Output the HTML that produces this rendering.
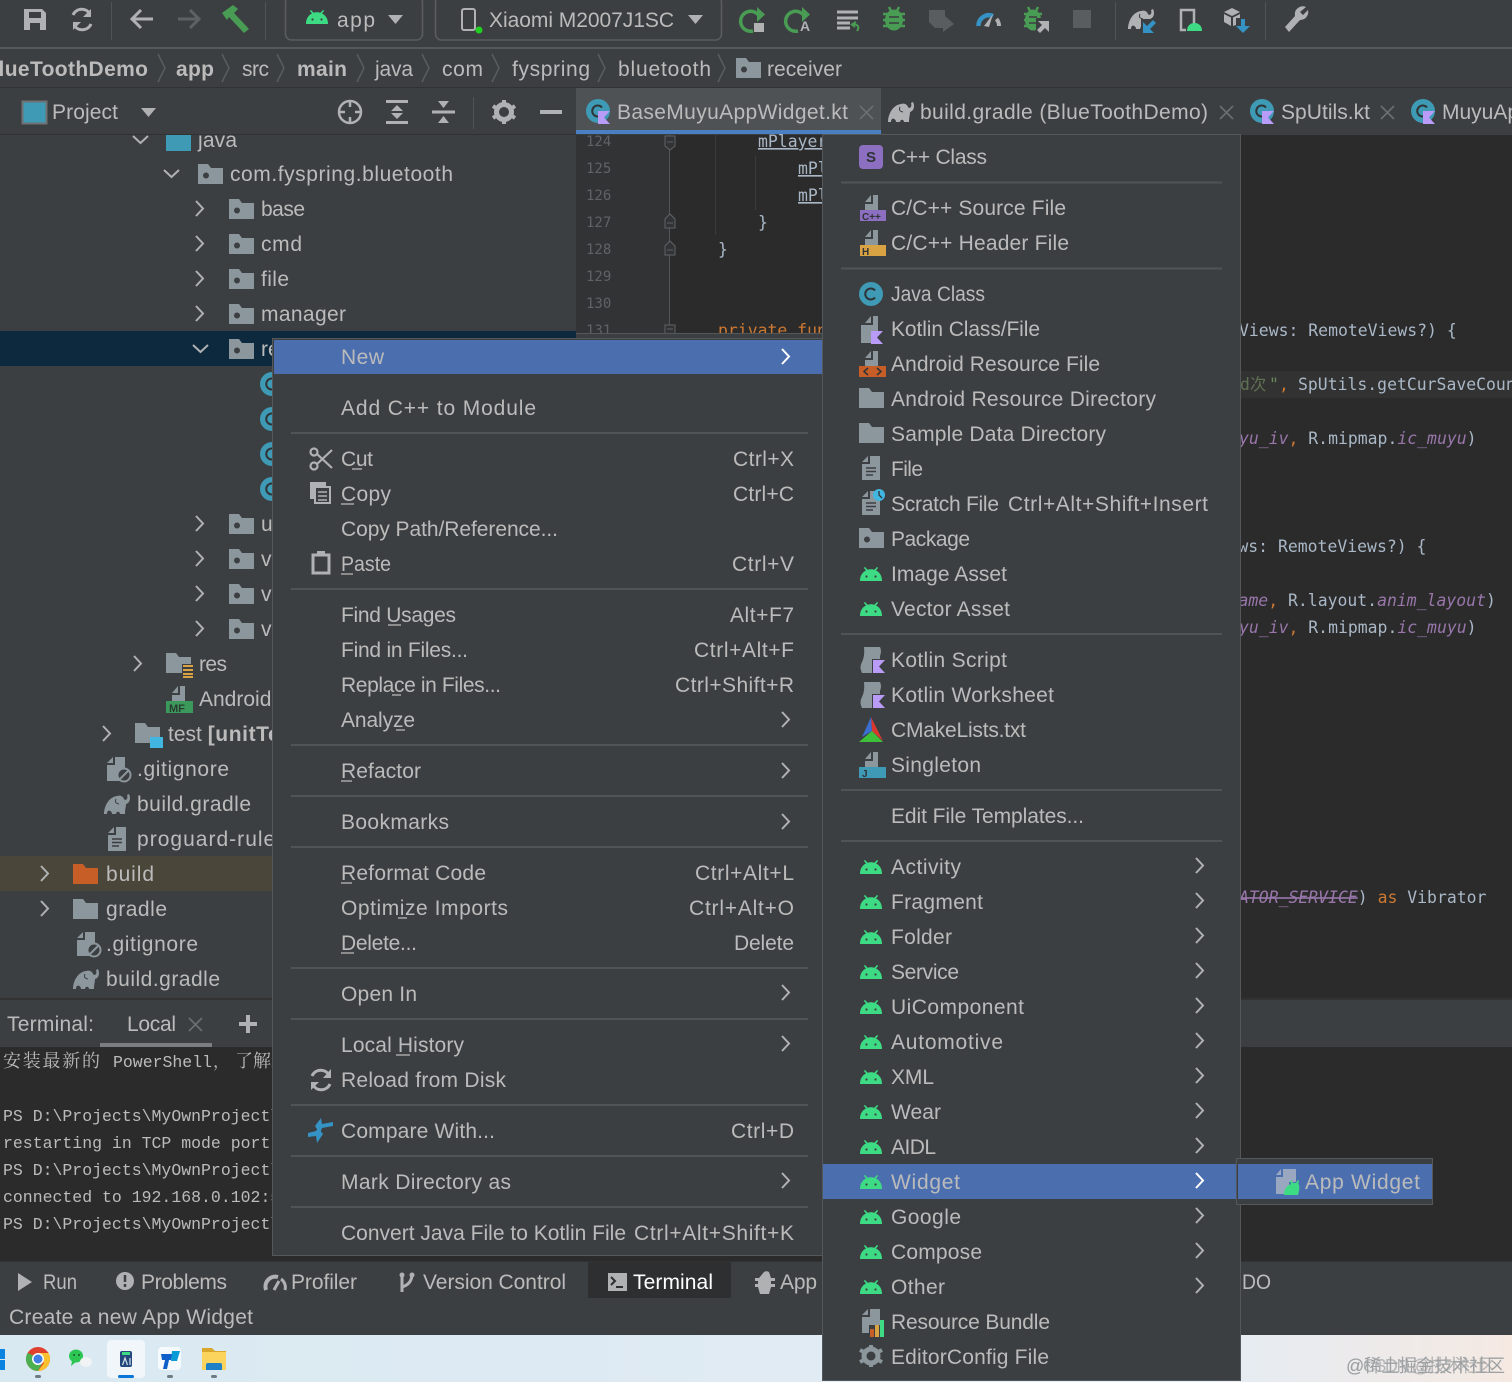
<!DOCTYPE html>
<html><head><meta charset="utf-8"><title>Android Studio</title>
<style>
html,body{margin:0;padding:0;background:#3c3f41;width:1512px;height:1382px;overflow:hidden}
svg{display:block}
text{font-family:"Liberation Sans","Noto Sans CJK SC",sans-serif;font-size:21px;fill:#bbb;white-space:pre}
text.m{font-family:"DejaVu Sans Mono","Noto Sans CJK SC",monospace;font-size:16.44px;fill:#a9b7c6}
text.t{font-family:"Liberation Mono","Noto Serif CJK SC",monospace;font-size:16.5px;fill:#bbb}
.ln{font-family:"DejaVu Sans Mono",monospace;font-size:14px;fill:#606366}
.b{font-weight:bold}
.sep{stroke:#515456;stroke-width:2}
.ch{fill:none;stroke:#afb1b3;stroke-width:2}
.chw{fill:none;stroke:#fff;stroke-width:2}
</style></head><body>
<svg width="1512" height="1382" viewBox="0 0 1512 1382" xmlns="http://www.w3.org/2000/svg">
<defs>
<linearGradient id="tb" x1="0" x2="1" y1="0" y2="0"><stop offset="0" stop-color="#d9e9f2"/><stop offset=".8" stop-color="#e4ecf4"/><stop offset="1" stop-color="#f5e9e2"/></linearGradient>
<g id="an"><path fill="#3ddc84" d="M0 14C0 8 3 5 6 3.5L3.8.8 5 0 7.6 2.8C9.5 2 12.5 2 14.4 2.8L17 0 18.2.8 16 3.5C19 5 22 8 22 14Z"/><circle cx="6.5" cy="9.5" r="1.1" fill="#3c3f41"/><circle cx="15.5" cy="9.5" r="1.1" fill="#3c3f41"/></g>
<path id="fo" d="M0 0H10L13 4H25V20H0Z"/>
<g id="pk"><use href="#fo" fill="#8c969d"/><circle cx="8" cy="11.5" r="3" fill="#3c3f41"/></g>
<path id="dc" fill="#8c969d" d="M6 0V6H0Z M8 0H18V24H0V8H8Z"/>
<g id="tx"><use href="#dc"/><path stroke="#3c3f41" stroke-width="1.6" d="M4 12H14M4 15.5H14M4 19H11"/></g>
<path id="dt" fill="#8c969d" d="M6 0V7H0Z M8 0H13V15H0V9H8Z"/>
<path id="k" fill="#b99bf8" d="M0 0H12L6 6.5 12 13H0Z"/>
<g id="ks"><path fill="#8c969d" d="M4 0H20Q22 4 20 9V12H12V26H2Q-1 20 2 15 5 9 4 0Z"/><use href="#k" x="13" y="13"/></g>
<g id="cc"><circle cx="12" cy="12" r="12" fill="#3e9ab5"/><path d="M16 8.500A5.500 5.500 0 1 0 16 15.500" fill="none" stroke="#2f3436" stroke-width="2"/></g>
<g id="ck"><use href="#cc"/><use href="#k" x="12" y="12"/></g>
<g id="el"><path d="M0 20C0 12 5 3 13 2 16 1 19 2 20 5L21 6C23 6 24 4 23 1L25 0C27 4 26 9 22 10 22 13 21 15 21 20H16C16 17 12 17 12 20H8C8 17 5 16 4 17 3 18 3 19 3 20Z"/><path fill="none" stroke="#3c3f41" stroke-width="1" d="M12 5Q10 9 15 10"/></g>
<g id="gi"><use href="#dc"/><circle cx="17" cy="18" r="6.500" fill="#3c3f41" stroke="#8c969d" stroke-width="2"/><path d="M13 22L21 14" stroke="#8c969d" stroke-width="2"/></g>
<path id="cr" class="ch" d="M0 0L7 7.500 0 15"/>
<path id="cw" class="chw" d="M0 0L7 7.500 0 15"/>
<path id="cd" class="ch" d="M0 0L7.500 7 15 0"/>
<path id="x" fill="none" stroke="#6c6f71" stroke-width="1.600" d="M0 0L13 13M13 0L0 13"/>
<path id="tri" fill="#afb1b3" d="M0 0H15L7.500 9Z"/>
</defs>

<!-- backgrounds -->
<rect width="1512" height="1382" fill="#3c3f41"/>
<rect x="0" y="47" width="1512" height="2" fill="#55585a"/>
<rect x="0" y="87" width="1512" height="1" fill="#323232"/>
<rect x="576" y="135" width="936" height="865" fill="#2b2b2b"/>
<rect x="576" y="135" width="93" height="200" fill="#313335"/>
<rect x="1240" y="371" width="272" height="27" fill="#323232"/>

<!-- toolbar -->
<g fill="#afb1b3">
<path d="M24 9H42L46 13V30H24Z M29 12V18H41V12Z M30 23V30H40V23Z" fill-rule="evenodd"/>
<path fill="none" stroke="#afb1b3" stroke-width="3" d="M90 14A9.500 9.500 0 0 0 73 15M74 25A9.500 9.500 0 0 0 91 24"/>
<path d="M91 9V17H83Z M73 30V22H81Z"/>
<path fill="none" stroke="#afb1b3" stroke-width="3" d="M153 19H133M141 10L132 19 141 28"/>
<path fill="none" stroke="#5e6163" stroke-width="3" d="M178 19H198M190 10L199 19 190 28"/>
</g>
<rect x="111" y="2" width="1" height="38" fill="#515456"/><rect x="265" y="2" width="1" height="38" fill="#515456"/>
<path fill="#499c54" d="M222 13L233 5 238 9 234 13 249 29 244 33 229 17 227 20Z"/>
<rect x="285.500" y="-4" width="137" height="44" rx="6" fill="none" stroke="#5a5d5f" stroke-width="1.500"/>
<use href="#an" x="306" y="10"/>
<text x="337" y="27" textLength="38">app</text>
<use href="#tri" x="388" y="15"/>
<rect x="435.500" y="-4" width="286" height="44" rx="6" fill="none" stroke="#5a5d5f" stroke-width="1.500"/>
<rect x="462" y="9" width="13" height="21" rx="2" fill="none" stroke="#afb1b3" stroke-width="2"/><circle cx="479" cy="30" r="3.500" fill="#20d020"/>
<text x="489" y="27" textLength="185">Xiaomi M2007J1SC</text>
<use href="#tri" x="688" y="15"/>
<path fill="none" stroke="#499c54" stroke-width="3.500" d="M758 14.500A10 10 0 1 0 753 31"/><path fill="#499c54" d="M757 7L765 14.500 757 22Z"/><rect x="754" y="23" width="10" height="9" fill="#afb1b3"/>
<path fill="none" stroke="#499c54" stroke-width="3.500" d="M803 14.500A10 10 0 1 0 798 31"/><path fill="#499c54" d="M802 7L810 14.500 802 22Z"/><text x="800" y="31" style="font-size:14px;font-weight:bold;fill:#afb1b3">A</text>
<path stroke="#afb1b3" stroke-width="3" d="M837 12H858M837 18H858M837 23H850M837 28H850"/><path fill="none" stroke="#499c54" stroke-width="2" d="M853 24Q861 25 857 31M856 22L852 24.500 855 27"/>
<g fill="#499c54"><ellipse cx="894" cy="20" rx="9" ry="10.500"/><path stroke="#499c54" stroke-width="2.500" d="M883 14H905M883 20H905M883 26H905M889 7L891 11M899 7L897 11"/></g><path stroke="#3c3f41" stroke-width="1.600" d="M889 17H899M889 23H899"/>
<path fill="#5a5d5f" d="M929 10H945V16L954 24 943 32V28H935L929 22Z"/>
<path fill="none" stroke="#3592c4" stroke-width="4.500" d="M978.500 26A10.500 10.500 0 0 1 993 16"/><path fill="none" stroke="#afb1b3" stroke-width="4" d="M996.500 19A10.500 10.500 0 0 1 999 26"/><path fill="#afb1b3" d="M984 26L993 14 989 27Z"/>
<g fill="#499c54"><ellipse cx="1033" cy="20" rx="8" ry="10.500"/><path stroke="#499c54" stroke-width="2.500" d="M1024 14H1042M1024 20H1042M1024 26H1042M1028 7L1030 11M1038 7L1036 11"/></g><path stroke="#3c3f41" stroke-width="1.600" d="M1029 17H1037M1029 23H1037"/><path fill="#3c3f41" d="M1036 18H1052V34H1036Z"/><path fill="#afb1b3" d="M1038 21H1049V32L1045 28 1040 33 1037 30 1042 25Z"/>
<rect x="1073" y="10" width="18" height="18" fill="#5a5d5f"/>
<rect x="1115" y="2" width="1" height="38" fill="#515456"/><rect x="1265" y="2" width="1" height="38" fill="#515456"/>
<use href="#el" x="1128" y="9" fill="#afb1b3"/><path fill="#3c3f41" d="M1141 19H1158V34H1141Z"/><path fill="#3592c4" d="M1143 33V22L1147 26 1153 20 1156 23 1150 29 1154 33Z"/>
<path fill="none" stroke="#afb1b3" stroke-width="2.500" d="M1194 24V10H1181V30H1186"/><path fill="#3ddc84" d="M1187 31C1187 26 1190 23 1194.500 23 1199 23 1202 26 1202 31Z"/>
<path fill="#afb1b3" d="M1224 12L1232 8 1240 12 1232 16Z M1224 14L1231 17.500V26L1224 22Z M1233 17.500L1240 14V18H1236V25L1233 26Z"/><path fill="#3592c4" d="M1241 19H1245V26H1250L1243 33 1236 26H1241Z"/>
<path fill="#afb1b3" d="M1306 7A8 8 0 0 0 1295 16L1285 27 1289 32 1300 20A8 8 0 0 0 1308 10L1303 15 1300 12Z"/>

<!-- breadcrumbs -->
<text class="b" x="-17" y="76" textLength="165">BlueToothDemo</text>
<text class="b" x="176" y="76" textLength="38">app</text>
<text x="242" y="76" textLength="27">src</text>
<text class="b" x="297" y="76" textLength="50">main</text>
<text x="375" y="76" textLength="38">java</text>
<text x="442" y="76" textLength="41">com</text>
<text x="512" y="76" textLength="78">fyspring</text>
<text x="618" y="76" textLength="93">bluetooth</text>
<text x="767" y="76" textLength="75">receiver</text>
<g fill="none" stroke="#5a5d5f" stroke-width="1.500"><path d="M158 54L165 68 158 82"/><path d="M222 54L229 68 222 82"/><path d="M277 54L284 68 277 82"/><path d="M357 54L364 68 357 82"/><path d="M422 54L429 68 422 82"/><path d="M492 54L499 68 492 82"/><path d="M598 54L605 68 598 82"/><path d="M718 54L725 68 718 82"/></g>
<use href="#pk" x="736" y="58"/>

<!-- tree -->
<rect x="0" y="331" width="576" height="35" fill="#0d293e"/>
<rect x="0" y="856" width="576" height="35" fill="#4a4639"/>
<use href="#cd" x="133" y="136"/><use href="#fo" x="166" y="131" fill="#3e9ab5"/><text x="198" y="147" textLength="39">java</text>

<!-- project header -->
<rect x="0" y="88" width="576" height="46" fill="#3c3f41"/>
<rect x="0" y="134" width="576" height="1" fill="#323232"/>
<rect x="22.500" y="101.500" width="24" height="22" fill="#3e9ab5" stroke="#6f7274" stroke-width="2"/>
<text x="52" y="119" textLength="66">Project</text>
<use href="#tri" x="141" y="108"/>
<circle cx="350" cy="112" r="11" fill="none" stroke="#afb1b3" stroke-width="2.500"/><path stroke="#afb1b3" stroke-width="2.500" d="M338 112H345M355 112H362M350 100V107M350 117V124"/>
<path fill="#afb1b3" d="M386 100H408V103H386Z M386 121H408V124H386Z M397 105L403 111H391Z M397 119L391 113H403Z"/>
<path fill="#afb1b3" d="M432 110.500H455V113.500H432Z M443.500 108L438 101H449Z M443.500 116L449 123H438Z"/>
<rect x="473" y="97" width="1" height="32" fill="#515456"/>
<circle cx="504" cy="112" r="7.500" fill="none" stroke="#afb1b3" stroke-width="5"/><path stroke="#afb1b3" stroke-width="4" d="M504 100V104M504 120V124M493 106L496 108M512 116L515 118M493 118L496 116M512 108L515 106"/>
<rect x="540" y="110" width="22" height="4" fill="#afb1b3"/>

<use href="#cd" x="164" y="170"/><use href="#pk" x="198" y="164"/><text x="230" y="181" textLength="223">com.fyspring.bluetooth</text>
<use href="#cr" x="196" y="201"/><use href="#pk" x="229" y="199"/><text x="261" y="216" textLength="44">base</text>
<use href="#cr" x="196" y="236"/><use href="#pk" x="229" y="234"/><text x="261" y="251" textLength="41">cmd</text>
<use href="#cr" x="196" y="271"/><use href="#pk" x="229" y="269"/><text x="261" y="286" textLength="28">file</text>
<use href="#cr" x="196" y="306"/><use href="#pk" x="229" y="304"/><text x="261" y="321" textLength="85">manager</text>
<use href="#cd" x="193" y="345"/><use href="#pk" x="229" y="339"/><text x="261" y="356">receiver</text>
<use href="#ck" x="260" y="372"/><use href="#cc" x="260" y="407"/><use href="#cc" x="260" y="442"/><use href="#cc" x="260" y="477"/>
<use href="#cr" x="196" y="516"/><use href="#pk" x="229" y="514"/><text x="261" y="531">ui</text>
<use href="#cr" x="196" y="551"/><use href="#pk" x="229" y="549"/><text x="261" y="566">view</text>
<use href="#cr" x="196" y="586"/><use href="#pk" x="229" y="584"/><text x="261" y="601">vm</text>
<use href="#cr" x="196" y="621"/><use href="#pk" x="229" y="619"/><text x="261" y="636">vo</text>
<use href="#cr" x="134" y="656"/><use href="#fo" x="166" y="653" fill="#8c969d"/><rect x="182" y="664" width="11" height="14" fill="#3c3f41"/><path stroke="#d9a343" stroke-width="2" d="M183 666H193M183 670H193M183 674H193M183 677H193"/><text x="199" y="671" textLength="28">res</text>
<use href="#dt" x="172" y="686"/><rect x="166" y="701" width="27" height="12" fill="#3b9a5b"/><text x="169" y="712" style="font-size:11px;fill:#2b3a30;font-weight:bold">MF</text><text x="199" y="706">AndroidManifest.xml</text>
<use href="#cr" x="103" y="726"/><use href="#fo" x="135" y="723" fill="#8c969d"/><rect x="150" y="737" width="13" height="11" fill="#40b6e0"/><text x="168" y="741">test <tspan class="b" letter-spacing=".6">[unitTest]</tspan></text>
<use href="#gi" x="107" y="757"/><text x="137" y="776" textLength="92">.gitignore</text>
<use href="#el" x="104" y="794" fill="#8c969d"/><text x="137" y="811" textLength="114">build.gradle</text>
<use href="#tx" x="108" y="827"/><text x="137" y="846" textLength="190">proguard-rules.pro</text>
<use href="#cr" x="41" y="866"/><use href="#fo" x="73" y="864" fill="#c75d27"/><text x="106" y="881" textLength="48">build</text>
<use href="#cr" x="41" y="901"/><use href="#fo" x="73" y="899" fill="#8c969d"/><text x="106" y="916" textLength="61">gradle</text>
<use href="#gi" x="77" y="932"/><text x="106" y="951" textLength="92">.gitignore</text>
<use href="#el" x="73" y="969" fill="#8c969d"/><text x="106" y="986" textLength="114">build.gradle</text>

<!-- editor -->
<text class="ln" x="586" y="146">124</text><text class="ln" x="586" y="173">125</text><text class="ln" x="586" y="200">126</text><text class="ln" x="586" y="227">127</text><text class="ln" x="586" y="254">128</text><text class="ln" x="586" y="281">129</text><text class="ln" x="586" y="308">130</text><text class="ln" x="586" y="335">131</text>
<path stroke="#555" d="M669.500 135V334"/>
<path stroke="#3b3b3b" d="M715.500 135V235M755.500 156V210"/>
<g fill="#313335" stroke="#606366"><path d="M665 136H675V146L670 150 665 146Z"/><path d="M665 219L670 214 675 219V228H665Z"/><path d="M665 246L670 241 675 246V255H665Z"/><rect x="665" y="325" width="10" height="9"/></g>
<path stroke="#606366" d="M667 142H673M667 223H673M667 250H673M667 329H673"/>
<text class="m" x="758" y="147" text-decoration="underline">mPlayer</text>
<text class="m" x="798" y="174" text-decoration="underline">mPlayer</text>
<text class="m" x="798" y="201" text-decoration="underline">mPlayer</text>
<text class="m" x="758" y="228">}</text>
<text class="m" x="718" y="255">}</text>
<text class="m" x="718" y="336" style="fill:#cc7832">private fun</text>
<rect x="576" y="333" width="248" height="6" fill="#3c3f41"/><rect x="576" y="333" width="248" height="1" fill="#55585a"/>
<text class="m" x="1239" y="336">Views: RemoteViews?) {</text>
<text class="m" x="1240" y="390"><tspan style="fill:#5f7052">d次</tspan><tspan x="1269" style="fill:#6a8759">"</tspan><tspan x="1279" style="fill:#cc7832">,</tspan><tspan x="1298">SpUtils.getCurSaveCount()</tspan></text>
<text class="m" x="1239" y="444"><tspan style="fill:#9876aa;font-style:italic">yu_iv</tspan><tspan style="fill:#cc7832">,</tspan> R.mipmap.<tspan style="fill:#9876aa;font-style:italic">ic_muyu</tspan>)</text>
<text class="m" x="1238.400" y="552">ws: RemoteViews?) {</text>
<text class="m" x="1238.500" y="606"><tspan style="fill:#9876aa;font-style:italic">ame</tspan><tspan style="fill:#cc7832">,</tspan> R.layout.<tspan style="fill:#9876aa;font-style:italic">anim_layout</tspan>)</text>
<text class="m" x="1239" y="633"><tspan style="fill:#9876aa;font-style:italic">yu_iv</tspan><tspan style="fill:#cc7832">,</tspan> R.mipmap.<tspan style="fill:#9876aa;font-style:italic">ic_muyu</tspan>)</text>
<text class="m" x="1239" y="903"><tspan style="fill:#9876aa;font-style:italic" text-decoration="line-through">ATOR_SERVICE</tspan>) <tspan style="fill:#cc7832">as</tspan> Vibrator</text>

<!-- tabs -->
<rect x="576" y="88" width="305" height="46" fill="#4e5254"/>
<rect x="576" y="130" width="305" height="4" fill="#4a7fc1"/>
<use href="#ck" x="586" y="99"/><text x="617" y="119" textLength="231">BaseMuyuAppWidget.kt</text><use href="#x" x="860" y="106"/>
<use href="#el" x="888" y="102" fill="#afb1b3"/><text x="920" y="119" textLength="288">build.gradle (BlueToothDemo)</text><use href="#x" x="1220" y="106"/>
<use href="#ck" x="1250" y="99"/><text x="1281" y="119" textLength="89">SpUtils.kt</text><use href="#x" x="1381" y="106"/>
<use href="#ck" x="1411" y="99"/><text x="1442" y="119">MuyuAppWidget.kt</text>

<!-- terminal -->
<rect x="0" y="998" width="1512" height="2" fill="#323232"/>
<rect x="0" y="1000" width="1512" height="47" fill="#3c3f41"/>
<rect x="0" y="1047" width="1512" height="214" fill="#2b2b2b"/>
<text x="7" y="1031" textLength="87">Terminal:</text>
<text x="127" y="1031" textLength="49">Local</text>
<use href="#x" x="189" y="1018"/>
<rect x="100" y="1043" width="112" height="4" fill="#7b7e80"/>
<path fill="#afb1b3" d="M246 1015H250V1022H257V1026H250V1033H246V1026H239V1022H246Z"/>
<text class="t" y="1067"><tspan x="3" style="font-size:18px;font-family:'Noto Serif CJK SC',serif" textLength="97">安装最新的</tspan><tspan x="113">PowerShell</tspan><tspan x="213" style="font-family:'Noto Serif CJK SC',serif">，</tspan><tspan x="235" style="font-size:18px;font-family:'Noto Serif CJK SC',serif">了解新功能</tspan></text>
<text class="t" x="3" y="1121">PS D:\Projects\MyOwnProject\BlueToothDemo&gt; adb tcpip 5555</text>
<text class="t" x="3" y="1148">restarting in TCP mode port: 5555</text>
<text class="t" x="3" y="1175">PS D:\Projects\MyOwnProject\BlueToothDemo&gt; adb connect</text>
<text class="t" x="3" y="1202">connected to 192.168.0.102:5555</text>
<text class="t" x="3" y="1229">PS D:\Projects\MyOwnProject\BlueToothDemo&gt;</text>

<!-- bottom bar -->
<rect x="0" y="1261" width="1512" height="74" fill="#3c3f41"/>
<rect x="0" y="1261" width="1512" height="1" fill="#323232"/>
<rect x="588" y="1262" width="143" height="36" fill="#2d2f30"/>
<path fill="#afb1b3" d="M18 1273L32 1282 18 1291Z"/><text x="43" y="1289" textLength="34" lengthAdjust="spacingAndGlyphs">Run</text>
<circle cx="125" cy="1281" r="9" fill="#afb1b3"/><path stroke="#3c3f41" stroke-width="2.500" d="M125 1275V1282M125 1284V1287"/><text x="141" y="1289" textLength="86">Problems</text>
<path fill="none" stroke="#afb1b3" stroke-width="4" d="M266 1290A10 10 0 0 1 278 1277"/><path fill="none" stroke="#afb1b3" stroke-width="3" d="M281 1279A10 10 0 0 1 285 1290M274 1290L279 1281"/><text x="291" y="1289" textLength="66">Profiler</text>
<path fill="none" stroke="#afb1b3" stroke-width="3" d="M402 1273V1292M402 1287Q412 1284 412 1274"/><circle cx="402" cy="1275" r="2.500" fill="#afb1b3"/><circle cx="412" cy="1275" r="2.500" fill="#afb1b3"/><text x="423" y="1289" textLength="143">Version Control</text>
<rect x="608" y="1273" width="19" height="18" fill="#afb1b3"/><path fill="none" stroke="#2d2f30" stroke-width="2" d="M611 1277L615 1281 611 1285M616 1287H623"/><text x="633" y="1289" textLength="80" style="fill:#fff">Terminal</text>
<path fill="#afb1b3" d="M764 1272A5 5 0 0 1 769 1272L771 1278H775V1281H771V1284H775V1287H771L769 1294H760L758 1287H755V1284H758V1281H755V1278H759Z"/><text x="780" y="1289" textLength="37">App</text>
<text x="1242" y="1289" textLength="29" lengthAdjust="spacingAndGlyphs">DO</text>
<text x="9" y="1324" textLength="244">Create a new App Widget</text>

<!-- taskbar -->
<rect x="0" y="1335" width="1512" height="47" fill="url(#tb)"/>
<rect x="0" y="1349" width="5" height="10" fill="#0a84e0"/><rect x="0" y="1360" width="5" height="10" fill="#0a84e0"/>
<circle cx="38" cy="1359" r="12" fill="#e0412f"/><path fill="#4caf50" d="M27.600 1353A12 12 0 0 0 38 1371L44 1360Z"/><path fill="#fbc02d" d="M38 1371A12 12 0 0 0 48.400 1353H38L44 1363Z"/><circle cx="38" cy="1359" r="6" fill="#fff"/><circle cx="38" cy="1359" r="4.500" fill="#3f7fe6"/>
<rect x="35" y="1375" width="6" height="3" rx="1.500" fill="#6f7b82"/>
<ellipse cx="76" cy="1356" rx="7" ry="6.500" fill="#2dc653"/><path fill="#2dc653" d="M72 1361L71 1366 76 1362Z"/><ellipse cx="86" cy="1362" rx="6" ry="5" fill="#f1f3f4"/><circle cx="74" cy="1355" r="1" fill="#1a5a2c"/><circle cx="79" cy="1355" r="1" fill="#1a5a2c"/>
<rect x="107" y="1340" width="38" height="38" rx="4" fill="#f0f6fa"/>
<rect x="120" y="1351" width="12" height="16" rx="2" fill="#24477e"/><path fill="#3ddc84" d="M122 1352H130V1355H122Z"/><path stroke="#d8e2ea" stroke-width="1.200" fill="none" d="M122.500 1365L125 1358 127.500 1365M130 1358V1365"/>
<rect x="118" y="1375" width="16" height="3" rx="1.500" fill="#0a74d8"/>
<rect x="158" y="1347" width="23" height="23" rx="4" fill="#f6fafc"/>
<path fill="#0a9ad6" d="M172 1351H180L177 1361H171Z"/><path fill="#1160c9" d="M161 1354H172L171 1360H169L167 1369H163L165 1360H162Z"/>
<rect x="167" y="1375" width="6" height="3" rx="1.500" fill="#6f7b82"/>
<path fill="#d9a72c" d="M202 1348H212L215 1351H226V1370H202Z"/><rect x="202" y="1352" width="24" height="18" fill="#fbd45e"/><path fill="#1e80c6" d="M206 1370V1365Q206 1363 208 1363H220Q222 1363 222 1365V1370Z"/>
<rect x="211" y="1375" width="6" height="3" rx="1.500" fill="#6f7b82"/>
<text x="1346" y="1372" textLength="159" style="font-size:18px;fill:#9da1a4">@稀土掘金技术社区</text>
<text x="1346" y="1372" textLength="150" style="font-size:18px;fill:#9da1a4;opacity:.7">@CSDN @技术社区</text>

<!-- left menu -->
<rect x="272.500" y="338.500" width="550" height="917" fill="#3c3f41" stroke="#55585a"/>
<rect x="274" y="340" width="549" height="34" fill="#4b6eaf"/>
<text x="341" y="364" textLength="43">New</text><use href="#cw" x="782" y="349"/>
<path class="sep" d="M291 433H808M291 589H808M291 745H808M291 796H808M291 847H808M291 968H808M291 1019H808M291 1105H808M291 1156H808M291 1207H808"/>
<text x="341" y="415" textLength="195">Add C++ to Module</text>
<text x="341" y="466" textLength="32">Cut</text><text x="733" y="466" textLength="61">Ctrl+X</text>
<text x="341" y="501" textLength="50">Copy</text><text x="733" y="501" textLength="61">Ctrl+C</text>
<text x="341" y="536" textLength="217">Copy Path/Reference...</text>
<text x="341" y="571" textLength="50" lengthAdjust="spacingAndGlyphs">Paste</text><text x="732" y="571" textLength="62">Ctrl+V</text>
<text x="341" y="622" textLength="115">Find Usages</text><text x="730" y="622" textLength="64">Alt+F7</text>
<text x="341" y="657" textLength="127">Find in Files...</text><text x="694" y="657" textLength="100">Ctrl+Alt+F</text>
<text x="341" y="692" textLength="160">Replace in Files...</text><text x="675" y="692" textLength="119">Ctrl+Shift+R</text>
<text x="341" y="727" textLength="74">Analyze</text><use href="#cr" x="782" y="712"/>
<text x="341" y="778" textLength="80">Refactor</text><use href="#cr" x="782" y="763"/>
<text x="341" y="829" textLength="108">Bookmarks</text><use href="#cr" x="782" y="814"/>
<text x="341" y="880" textLength="145">Reformat Code</text><text x="695" y="880" textLength="99">Ctrl+Alt+L</text>
<text x="341" y="915" textLength="167">Optimize Imports</text><text x="689" y="915" textLength="105">Ctrl+Alt+O</text>
<text x="341" y="950" textLength="76">Delete...</text><text x="734" y="950" textLength="60">Delete</text>
<text x="341" y="1001" textLength="76">Open In</text><use href="#cr" x="782" y="985"/>
<text x="341" y="1052" textLength="123">Local History</text><use href="#cr" x="782" y="1036"/>
<text x="341" y="1087" textLength="165">Reload from Disk</text>
<text x="341" y="1138" textLength="154">Compare With...</text><text x="731" y="1138" textLength="63">Ctrl+D</text>
<text x="341" y="1189" textLength="170">Mark Directory as</text><use href="#cr" x="782" y="1173"/>
<text x="341" y="1240" textLength="285">Convert Java File to Kotlin File</text><text x="634" y="1240" textLength="160">Ctrl+Alt+Shift+K</text>
<path stroke="#bbb" stroke-width="1.300" d="M352 469H362M341 504H354M341 574H353M388 625H401M392 695H401M396 730H405M341 781H352M341 883H352M398 918H407M341 953H354M396 1055H410"/>
<!-- left menu icons -->
<g fill="none" stroke="#afb1b3" stroke-width="2.200"><circle cx="314" cy="452" r="3.500"/><circle cx="314" cy="466" r="3.500"/><path d="M317 454L332 468M317 464L332 450"/></g>
<rect x="310" y="482" width="16" height="17" fill="#afb1b3"/><rect x="315" y="487" width="15" height="16" fill="#3c3f41" stroke="#afb1b3" stroke-width="2"/><path stroke="#afb1b3" stroke-width="1.500" d="M318 492H327M318 496H327M318 500H327"/>
<rect x="313" y="555" width="16" height="18" fill="none" stroke="#afb1b3" stroke-width="3"/><rect x="317" y="551" width="8" height="5" fill="#afb1b3"/>
<path fill="none" stroke="#afb1b3" stroke-width="3" d="M329 1075A9.500 9.500 0 0 0 312 1076M313 1085A9.500 9.500 0 0 0 330 1084"/><path fill="#afb1b3" d="M331 1069V1078H323Z M311 1090V1082H319Z"/>
<path fill="#3592c4" d="M321 1118L322 1124 333 1122V1126L322 1128 320 1134 315 1126Z M317 1143L316 1136 308 1137V1133L316 1131 318 1128 323 1134Z"/>

<!-- right menu -->
<rect x="822.500" y="134.500" width="418" height="1246" fill="#3c3f41" stroke="#55585a"/>
<path class="sep" d="M841 182.500H1222M841 268.500H1222M841 634H1222M841 790H1222M841 841H1222"/>
<rect x="823" y="1164" width="417" height="35" fill="#4b6eaf"/>

<rect x="859" y="145" width="24" height="24" rx="4" fill="#8c6fc0"/><text x="866" y="162" style="font-size:15px;fill:#2f3436;font-weight:bold">S</text>
<text x="891" y="164" textLength="96">C++ Class</text>
<use href="#dt" x="865" y="195"/><rect x="860" y="210" width="26" height="11" fill="#8c6fc0"/><text x="862" y="220" style="font-size:10px;fill:#2f3436;font-weight:bold">C++</text>
<text x="891" y="215" textLength="175">C/C++ Source File</text>
<use href="#dt" x="865" y="230"/><rect x="860" y="245" width="26" height="11" fill="#d9a343"/><text x="862" y="255" style="font-size:10px;fill:#2f3436;font-weight:bold">H</text>
<text x="891" y="250" textLength="178">C/C++ Header File</text>
<use href="#cc" x="859" y="282"/><text x="891" y="301" textLength="94" lengthAdjust="spacingAndGlyphs">Java Class</text>
<use href="#dt" x="865" y="316"/><path fill="#8c969d" d="M861 325H878V331H871V343H861Z"/><use href="#k" x="871" y="331"/><text x="891" y="336" textLength="149">Kotlin Class/File</text>
<use href="#dt" x="865" y="351"/><rect x="859" y="366" width="27" height="11" fill="#c75d27"/><path fill="none" stroke="#2f3436" stroke-width="1.500" d="M868 368L864 371.500 868 375M877 368L881 371.500 877 375"/><text x="891" y="371" textLength="209">Android Resource File</text>
<use href="#fo" x="859" y="388" fill="#8c969d"/><text x="891" y="406" textLength="265">Android Resource Directory</text>
<use href="#fo" x="859" y="423" fill="#8c969d"/><text x="891" y="441" textLength="215">Sample Data Directory</text>
<use href="#tx" x="862" y="456"/><text x="891" y="476" textLength="32">File</text>
<use href="#tx" x="862" y="491"/><circle cx="879" cy="495" r="6" fill="#40b6e0"/><path stroke="#2f3436" stroke-width="1.300" fill="none" d="M879 491V495L882 498"/><text x="891" y="511" textLength="108">Scratch File</text><text x="1008" y="511" textLength="200">Ctrl+Alt+Shift+Insert</text>
<use href="#pk" x="859" y="528"/><text x="891" y="546" textLength="79">Package</text>
<use href="#an" x="860" y="567"/><text x="891" y="581" textLength="116">Image Asset</text>
<use href="#an" x="860" y="602"/><text x="891" y="616" textLength="119">Vector Asset</text>
<use href="#ks" x="860" y="647"/><text x="891" y="667" textLength="116">Kotlin Script</text>
<use href="#ks" x="860" y="682"/><text x="891" y="702" textLength="163">Kotlin Worksheet</text>
<path fill="#d8382e" d="M871 717L883 741 872 731Z"/><path fill="#3a6ecf" d="M871 717L872 731 862 737Z"/><path fill="#3ec03a" d="M859 742L872 731 883 742Z"/>
<text x="891" y="737" textLength="135">CMakeLists.txt</text>
<use href="#dt" x="865" y="752"/><rect x="859" y="767" width="27" height="11" fill="#3e9ab5"/><text x="862" y="777" style="font-size:10px;fill:#2f3436;font-weight:bold">J</text><text x="891" y="772" textLength="90">Singleton</text>
<text x="891" y="823" textLength="193">Edit File Templates...</text>

<use href="#an" x="860" y="860"/><text x="891" y="874" textLength="70">Activity</text><use href="#cr" x="1196" y="858"/>
<use href="#an" x="860" y="895"/><text x="891" y="909" textLength="92">Fragment</text><use href="#cr" x="1196" y="893"/>
<use href="#an" x="860" y="930"/><text x="891" y="944" textLength="61">Folder</text><use href="#cr" x="1196" y="928"/>
<use href="#an" x="860" y="965"/><text x="891" y="979" textLength="68">Service</text><use href="#cr" x="1196" y="963"/>
<use href="#an" x="860" y="1000"/><text x="891" y="1014" textLength="133">UiComponent</text><use href="#cr" x="1196" y="998"/>
<use href="#an" x="860" y="1035"/><text x="891" y="1049" textLength="112">Automotive</text><use href="#cr" x="1196" y="1033"/>
<use href="#an" x="860" y="1070"/><text x="891" y="1084" textLength="43">XML</text><use href="#cr" x="1196" y="1068"/>
<use href="#an" x="860" y="1105"/><text x="891" y="1119" textLength="50">Wear</text><use href="#cr" x="1196" y="1103"/>
<use href="#an" x="860" y="1140"/><text x="891" y="1154" textLength="45">AIDL</text><use href="#cr" x="1196" y="1138"/>
<use href="#an" x="860" y="1175"/><text x="891" y="1189" textLength="69">Widget</text><use href="#cw" x="1196" y="1173"/>
<use href="#an" x="860" y="1210"/><text x="891" y="1224" textLength="70">Google</text><use href="#cr" x="1196" y="1208"/>
<use href="#an" x="860" y="1245"/><text x="891" y="1259" textLength="91">Compose</text><use href="#cr" x="1196" y="1243"/>
<use href="#an" x="860" y="1280"/><text x="891" y="1294" textLength="54">Other</text><use href="#cr" x="1196" y="1278"/>
<use href="#dc" x="862" y="1309"/><rect x="869" y="1325" width="17" height="12" fill="#3c3f41"/><rect x="870" y="1329" width="4" height="8" fill="#c75d27"/><rect x="875" y="1325" width="4" height="12" fill="#d9a343"/><rect x="880" y="1320" width="4" height="17" fill="#3ddc84"/>
<text x="891" y="1329" textLength="159">Resource Bundle</text>
<circle cx="871" cy="1356" r="7" fill="none" stroke="#8c969d" stroke-width="5"/><path stroke="#8c969d" stroke-width="4" d="M871 1345V1349M871 1363V1367M860 1350L864 1352M878 1360L882 1362M860 1362L864 1360M878 1352L882 1350"/>
<text x="891" y="1364" textLength="158">EditorConfig File</text>

<!-- submenu -->
<rect x="1236.500" y="1158.500" width="196" height="46" fill="#3c3f41" stroke="#55585a"/>
<rect x="1238" y="1164" width="194" height="35" fill="#4b6eaf"/>
<path fill="#9aa7c0" d="M1281 1169V1175H1276Z M1283 1169H1296V1182H1289V1194H1276V1177H1283Z"/>
<path fill="#3ddc84" d="M1284 1195C1284 1188 1288 1185 1291 1184L1290 1181 1291 1180 1293 1183H1296L1298 1180 1299 1181 1298 1184C1301 1185 1298 1195 1298 1195Z"/>
<text x="1305" y="1189" textLength="115">App Widget</text>
</svg>
</body></html>
